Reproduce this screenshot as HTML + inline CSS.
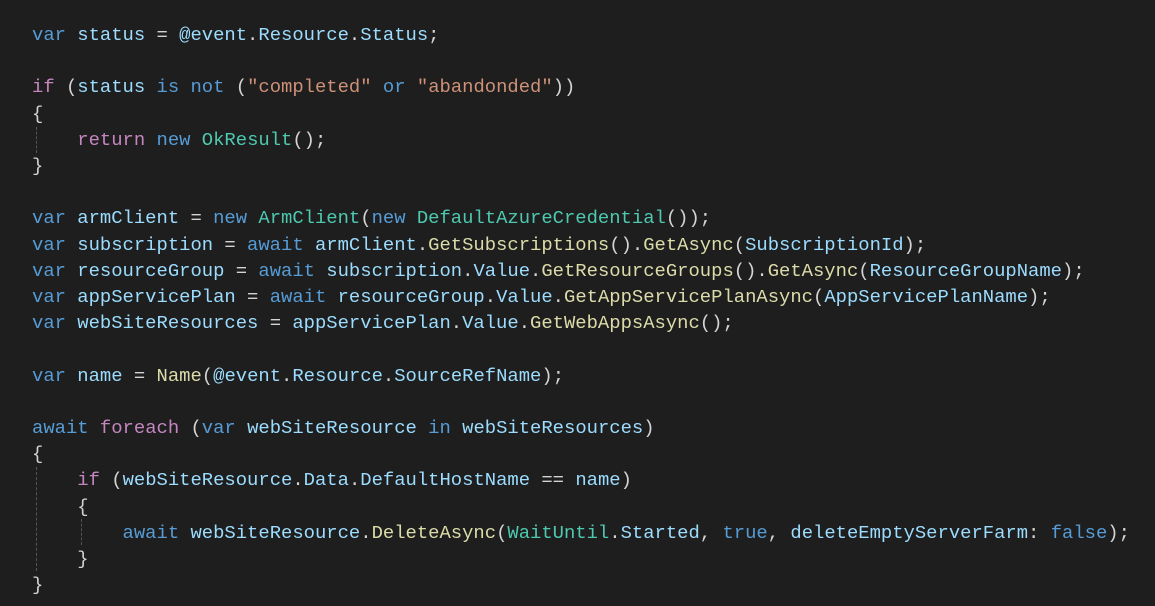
<!DOCTYPE html>
<html><head><style>
body{margin:0;background:#1e1e1e;width:1155px;height:606px;overflow:hidden;position:relative}
pre{margin:0;position:absolute;left:32px;top:22px;font-family:"Liberation Mono",monospace;font-size:18.87px;line-height:26.2px;color:#d4d4d4}
.k{color:#569cd6}.c{color:#c586c0}.v{color:#9cdcfe}.s{color:#ce9178}.t{color:#4ec9b0}.m{color:#dcdcaa}
.g{position:absolute;width:0;border-left:1px dashed #555}
</style></head><body>
<div class="g" style="left:36px;top:127px;height:26px"></div>
<div class="g" style="left:36px;top:467px;height:104px"></div>
<div class="g" style="left:81px;top:519px;height:26px"></div>
<pre><span class="k">var</span> <span class="v">status</span> = <span class="v">@event</span>.<span class="v">Resource</span>.<span class="v">Status</span>;

<span class="c">if</span> (<span class="v">status</span> <span class="k">is</span> <span class="k">not</span> (<span class="s">"completed"</span> <span class="k">or</span> <span class="s">"abandonded"</span>))
{
    <span class="c">return</span> <span class="k">new</span> <span class="t">OkResult</span>();
}

<span class="k">var</span> <span class="v">armClient</span> = <span class="k">new</span> <span class="t">ArmClient</span>(<span class="k">new</span> <span class="t">DefaultAzureCredential</span>());
<span class="k">var</span> <span class="v">subscription</span> = <span class="k">await</span> <span class="v">armClient</span>.<span class="m">GetSubscriptions</span>().<span class="m">GetAsync</span>(<span class="v">SubscriptionId</span>);
<span class="k">var</span> <span class="v">resourceGroup</span> = <span class="k">await</span> <span class="v">subscription</span>.<span class="v">Value</span>.<span class="m">GetResourceGroups</span>().<span class="m">GetAsync</span>(<span class="v">ResourceGroupName</span>);
<span class="k">var</span> <span class="v">appServicePlan</span> = <span class="k">await</span> <span class="v">resourceGroup</span>.<span class="v">Value</span>.<span class="m">GetAppServicePlanAsync</span>(<span class="v">AppServicePlanName</span>);
<span class="k">var</span> <span class="v">webSiteResources</span> = <span class="v">appServicePlan</span>.<span class="v">Value</span>.<span class="m">GetWebAppsAsync</span>();

<span class="k">var</span> <span class="v">name</span> = <span class="m">Name</span>(<span class="v">@event</span>.<span class="v">Resource</span>.<span class="v">SourceRefName</span>);

<span class="k">await</span> <span class="c">foreach</span> (<span class="k">var</span> <span class="v">webSiteResource</span> <span class="k">in</span> <span class="v">webSiteResources</span>)
{
    <span class="c">if</span> (<span class="v">webSiteResource</span>.<span class="v">Data</span>.<span class="v">DefaultHostName</span> == <span class="v">name</span>)
    {
        <span class="k">await</span> <span class="v">webSiteResource</span>.<span class="m">DeleteAsync</span>(<span class="t">WaitUntil</span>.<span class="v">Started</span>, <span class="k">true</span>, <span class="v">deleteEmptyServerFarm</span>: <span class="k">false</span>);
    }
}</pre>
</body></html>
